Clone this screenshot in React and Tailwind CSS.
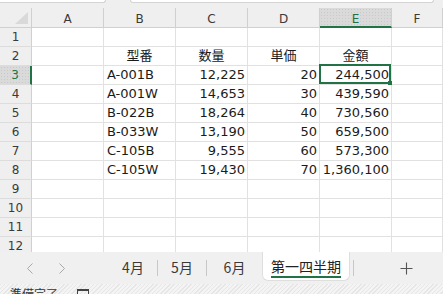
import React from "react";

const rows = [
  [],
  ["型番", "数量", "単価", "金額"],
  ["A-001B", "12,225", "20", "244,500"],
  ["A-001W", "14,653", "30", "439,590"],
  ["B-022B", "18,264", "40", "730,560"],
  ["B-033W", "13,190", "50", "659,500"],
  ["C-105B", "9,555", "60", "573,300"],
  ["C-105W", "19,430", "70", "1,360,100"],
  [],
  [],
  [],
  [],
];

const cols = ["A", "B", "C", "D", "E", "F"];

const Cell = ({ children, align = "left", selected = false }) => (
  <div
    className={`relative h-[19px] border-r border-b border-[#e1e1e1] bg-white pt-[1px] text-[13px] leading-[16px] text-[#1b1b1b] whitespace-nowrap ${
      align === "right" ? "pr-[2px] text-right" : align === "center" ? "text-center" : "pl-[3px]"
    }`}
  >
    {children}
    {selected && (
      <>
        <div className="absolute -top-[2px] -left-px right-0 bottom-0 border-2 border-[#217346] pointer-events-none"></div>
        <div className="absolute -right-[2px] -bottom-[2px] w-[5px] h-[5px] bg-[#217346]"></div>
      </>
    )}
  </div>
);

const Chevron = ({ dir }) => (
  <svg width="8" height="11" viewBox="0 0 8 11" className="mx-auto">
    <polyline
      points={dir === "left" ? "6.5,0.5 1.5,5.5 6.5,10.5" : "1.5,0.5 6.5,5.5 1.5,10.5"}
      fill="none"
      stroke="#a8a8a8"
      strokeWidth="1"
    />
  </svg>
);

const Sep = () => <div className="w-px h-[16px] bg-[#c8c8c8]"></div>;

export default function App() {
  return (
    <div className="w-[443px] h-[294px] overflow-hidden bg-[#efefef] flex flex-col font-['DejaVu_Sans','Noto_Sans_CJK_JP',sans-serif]">
      {/* name box / formula bar edges */}
      <div className="h-[8px] flex items-start shrink-0">
        <div className="w-[106px] h-[3px] bg-white border-r border-b border-[#d4d4d4] rounded-br-[3px]"></div>
        <div className="w-[24px]"></div>
        <div className="w-[304px] h-[3px] bg-white border-x border-b border-[#d4d4d4] rounded-b-[3px]"></div>
      </div>

      {/* grid */}
      <div className="h-[244px] overflow-hidden shrink-0">
        <div className="grid grid-cols-[32px_72px_72px_72px_72px_72px_1fr]">
          {/* corner */}
          <div className="h-[20px] border-r border-b border-[#d0d0d0] bg-[#efefef] flex items-end justify-end pr-[3px] pb-[3px]">
            <svg width="13" height="12" viewBox="0 0 13 12">
              <polygon points="13,0 13,12 0,12" fill="#d9d9d9" />
            </svg>
          </div>
          {cols.map((c) =>
            c === "E" ? (
              <div
                key={c}
                className="h-[20px] border-r border-b-2 border-r-[#d0d0d0] border-b-[#217346] bg-[#dadada] bg-[radial-gradient(#c9c9c9_0.7px,transparent_0.8px)] bg-[length:3px_3px] pt-[3px] text-center text-[12px] leading-[16px] text-[#217346]"
              >
                {c}
              </div>
            ) : (
              <div
                key={c}
                className="h-[20px] border-r border-b border-[#d0d0d0] bg-[#efefef] pt-[3px] text-center text-[12px] leading-[16px] text-[#3a3a3a]"
              >
                {c}
              </div>
            )
          )}

          {rows.map((r, i) => {
            const n = i + 1;
            const sel = n === 3;
            const header = n === 2;
            return (
              <React.Fragment key={n}>
                <div
                  className={`h-[19px] border-b border-b-[#dcdcdc] pt-[1px] text-center text-[12px] leading-[16px] ${
                    sel
                      ? "border-r-2 border-r-[#217346] bg-[#dadada] bg-[radial-gradient(#c9c9c9_0.7px,transparent_0.8px)] bg-[length:3px_3px] text-[#217346]"
                      : "border-r border-r-[#d0d0d0] bg-[#efefef] text-[#3a3a3a]"
                  }`}
                >
                  {n}
                </div>
                <Cell />
                <Cell align={header ? "center" : "left"}>{r[0]}</Cell>
                <Cell align={header ? "center" : "right"}>{r[1]}</Cell>
                <Cell align={header ? "center" : "right"}>{r[2]}</Cell>
                <Cell align={header ? "center" : "right"} selected={sel}>
                  {r[3]}
                </Cell>
                <Cell />
              </React.Fragment>
            );
          })}
        </div>
      </div>

      {/* sheet tabs */}
      <div className="h-[32px] shrink-0 flex items-start bg-[#f0f0f0] font-['Noto_Sans_CJK_JP',sans-serif] text-[14px] text-[#3a3a3a]">
        <div className="w-[14px]"></div>
        <div className="w-[32px] h-[32px] flex items-center">
          <Chevron dir="left" />
        </div>
        <div className="w-[32px] h-[32px] flex items-center">
          <Chevron dir="right" />
        </div>
        <div className="w-[31px]"></div>
        <div className="w-[48px] h-[32px] flex items-center justify-center pb-[1px]">4月</div>
        <div className="h-[32px] flex items-center"><Sep /></div>
        <div className="w-[48px] h-[32px] flex items-center justify-center pb-[1px]">5月</div>
        <div className="h-[32px] flex items-center"><Sep /></div>
        <div className="w-[55px] h-[32px] flex items-center justify-center pb-[1px]">6月</div>
        <div className="w-[88px] h-[29px] bg-white border-x border-b border-[#dedede] rounded-b-[6px] flex flex-col items-center pt-[5px]">
          <span className="leading-[18px] text-[#222]">第一四半期</span>
          <div className="w-[70px] h-[2px] bg-[#217346] mt-[1px]"></div>
        </div>
        <div className="w-[3px]"></div>
        <div className="h-[32px] flex items-center"><Sep /></div>
        <div className="w-[46px]"></div>
        <div className="h-[32px] flex items-center">
          <svg width="13" height="13" viewBox="0 0 13 13">
            <path d="M6.5 0.5V12.5M0.5 6.5H12.5" stroke="#555" strokeWidth="1.1" fill="none" />
          </svg>
        </div>
      </div>

      {/* status bar */}
      <div className="flex-1 flex items-start pl-[10px] pt-[3px] bg-[#f3f3f3] bg-[repeating-linear-gradient(135deg,#e6e6e6_0px,#e6e6e6_1px,#f4f4f4_1px,#f4f4f4_3px)] font-['Noto_Sans_CJK_JP',sans-serif] text-[12px] leading-[14px] text-[#333]">
        <span>準備完了</span>
        <div className="ml-[19px] mt-[2px] w-[12px] h-[10px] border border-[#444] border-t-2"></div>
      </div>
    </div>
  );
}
